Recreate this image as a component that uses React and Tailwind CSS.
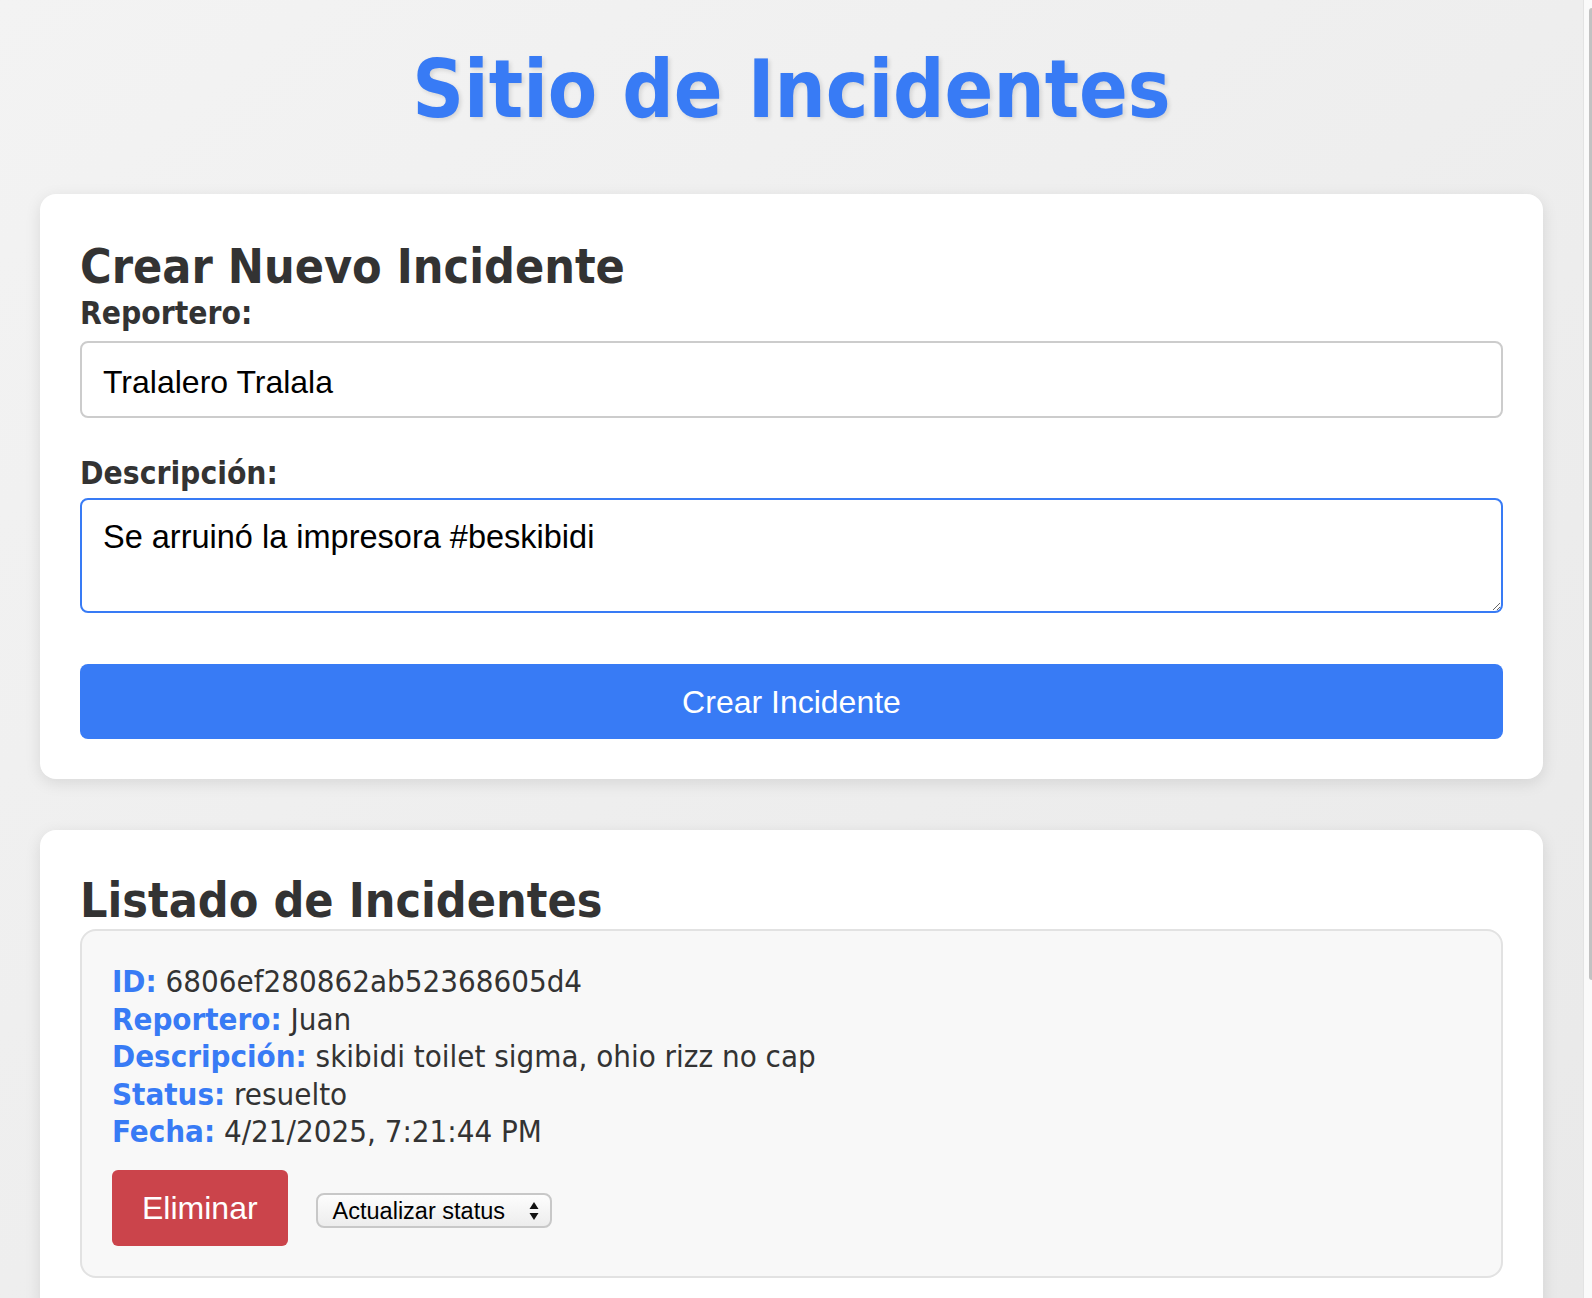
import { useEffect, useRef, useState } from 'react';

const incidents = [
  {
    _id: '6806ef280862ab52368605d4',
    reporter: 'Juan',
    description: 'skibidi toilet sigma, ohio rizz no cap',
    status: 'resuelto',
    date: '4/21/2025, 7:21:44 PM',
  },
];

function Field({ label, children }) {
  return (
    <div>
      <strong className="text-[#387bf5]">{label}</strong> {children}
    </div>
  );
}

export default function App() {
  const [reporter, setReporter] = useState('Tralalero Tralala');
  const [description, setDescription] = useState('Se arruinó la impresora #beskibidi');
  const descRef = useRef(null);

  useEffect(() => {
    const el = descRef.current;
    if (!el) return;
    el.focus();
    el.setSelectionRange(el.value.length, el.value.length);
  }, []);

  return (
    <div className="flex h-screen overflow-hidden bg-linear-to-br from-[#f3f3f3] to-[#e9e9e9] [font-family:'DejaVu_Sans_Condensed','DejaVu_Sans',sans-serif] font-stretch-condensed">
      <main className="flex-1 overflow-hidden px-[40px] pt-[42px]">
        <h1 className="mb-[56px] text-center text-[80px] leading-[96px] font-bold text-[#387bf5] [text-shadow:2px_2px_4px_rgba(0,0,0,0.12)]">
          Sitio de Incidentes
        </h1>

        <section className="rounded-[16px] bg-white px-[40px] pt-[43px] pb-[40px] shadow-[0_4px_16px_rgba(0,0,0,0.1)]">
          <h2 className="text-[48px] leading-[58px] font-bold text-[#333]">Crear Nuevo Incidente</h2>
          <label className="mt-[1px] block text-[31.5px] leading-[34px] font-bold text-[#333]">Reportero:</label>
          <input
            value={reporter}
            onChange={(e) => setReporter(e.target.value)}
            className="mt-[11px] block h-[77px] w-full rounded-[8px] border-2 border-[#cccccc] bg-white px-[21px] pt-[5px] text-[32px] text-black outline-none [font-family:'Liberation_Sans',Arial,sans-serif]"
          />
          <label className="mt-[38px] block text-[31.5px] leading-[34px] font-bold text-[#333]">Descripción:</label>
          <textarea
            ref={descRef}
            value={description}
            onChange={(e) => setDescription(e.target.value)}
            className="mt-[8px] block h-[115px] w-full rounded-[8px] border-2 border-[#387bf5] bg-white px-[21px] pt-[19px] text-[32.5px] leading-[37px] text-black caret-[#387bf5] outline-none [font-family:'Liberation_Sans',Arial,sans-serif]"
          />
          <button
            type="button"
            className="mt-[51px] block h-[75px] w-full rounded-[8px] bg-[#387bf5] text-[32px] text-white [font-family:'Liberation_Sans',Arial,sans-serif]"
          >
            Crear Incidente
          </button>
        </section>

        <section className="mt-[51px] rounded-[16px] bg-white px-[40px] pt-[41px] pb-[40px] shadow-[0_4px_16px_rgba(0,0,0,0.1)]">
          <h2 className="text-[48px] leading-[58px] font-bold text-[#333]">Listado de Incidentes</h2>
          {incidents.map((inc) => (
            <div
              key={inc._id}
              className="rounded-[16px] border-2 border-[#e2e2e2] bg-[#f8f8f8] px-[30px] pt-[32px] pb-[30px] text-[31px] leading-[37.6px] text-[#333]"
            >
              <Field label="ID:">{inc._id}</Field>
              <Field label="Reportero:">{inc.reporter}</Field>
              <Field label="Descripción:">{inc.description}</Field>
              <Field label="Status:">{inc.status}</Field>
              <Field label="Fecha:">{inc.date}</Field>
              <div className="mt-[19px] flex items-baseline gap-[28px] [font-family:'Liberation_Sans',Arial,sans-serif]">
                <button type="button" className="h-[76px] rounded-[6px] bg-[#cb444b] px-[30px] text-[32px] leading-[36px] text-white">
                  Eliminar
                </button>
                <div className="flex h-[35px] w-[236px] items-center justify-between rounded-[8px] border-2 border-[#c8c8c8] bg-linear-to-b from-[#fdfdfd] to-[#ededed] pl-[15px] pr-[11px] text-[23.5px] leading-[28px] text-black">
                  <span>Actualizar status</span>
                  <svg width="10" height="20" viewBox="0 0 10 20" fill="#111">
                    <path d="M5 1 L9.5 8 L0.5 8 Z" />
                    <path d="M0.5 12 L9.5 12 L5 19 Z" />
                  </svg>
                </div>
              </div>
            </div>
          ))}
        </section>
      </main>

      <div className="w-[9px] shrink-0 border-l border-[#e3e3e3] bg-[#fafafa] pt-[8px]">
        <div className="ml-auto h-[972px] w-[3px] rounded-l-full bg-[#c2c2c2]" />
      </div>
    </div>
  );
}
